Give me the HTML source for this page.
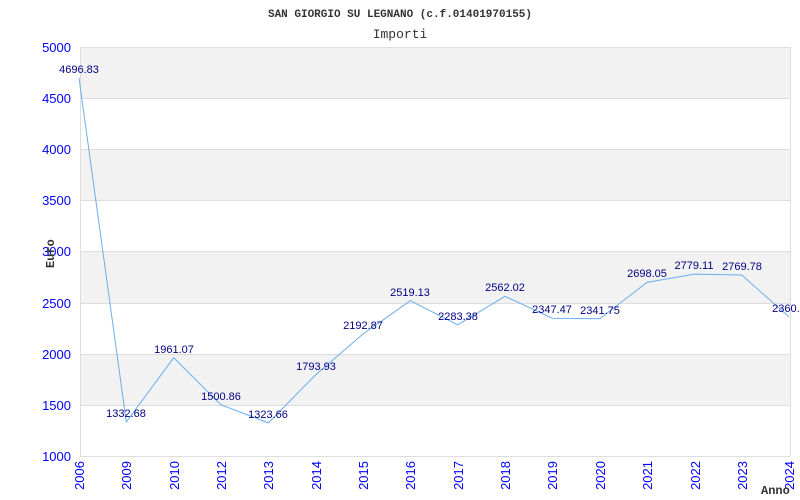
<!DOCTYPE html>
<html><head><meta charset="utf-8"><style>
html,body{margin:0;padding:0;background:#fff;width:800px;height:500px;overflow:hidden}
</style></head><body>
<svg width="800" height="500" xmlns="http://www.w3.org/2000/svg" font-family="Liberation Sans, sans-serif">
<rect width="800" height="500" fill="#fff"/>
<text x="400" y="17" text-anchor="middle" font-family="Liberation Mono, monospace" font-size="11" font-weight="bold" fill="#333">SAN GIORGIO SU LEGNANO (c.f.01401970155)</text>
<text x="400" y="38" text-anchor="middle" font-family="Liberation Mono, monospace" font-size="13" fill="#333">Importi</text>
<g fill="#f2f2f2">
<rect x="80" y="47" width="710" height="51"/>
<rect x="80" y="149" width="710" height="51"/>
<rect x="80" y="251" width="710" height="52"/>
<rect x="80" y="354" width="710" height="51"/>
</g>
<g stroke="#dddddd" stroke-width="1">
<line x1="80" y1="47.5" x2="790" y2="47.5"/>
<line x1="80" y1="98.5" x2="790" y2="98.5"/>
<line x1="80" y1="149.5" x2="790" y2="149.5"/>
<line x1="80" y1="200.5" x2="790" y2="200.5"/>
<line x1="80" y1="251.5" x2="790" y2="251.5"/>
<line x1="80" y1="303.5" x2="790" y2="303.5"/>
<line x1="80" y1="354.5" x2="790" y2="354.5"/>
<line x1="80" y1="405.5" x2="790" y2="405.5"/>
<line x1="80" y1="456.5" x2="790" y2="456.5"/>
<line x1="80.5" y1="47" x2="80.5" y2="456"/>
<line x1="790.5" y1="47" x2="790.5" y2="456"/>
</g>
<g fill="#0000ff" font-size="13" text-anchor="end">
<text x="71" y="52">5000</text><text x="71" y="103">4500</text><text x="71" y="154">4000</text><text x="71" y="205">3500</text><text x="71" y="256">3000</text><text x="71" y="308">2500</text><text x="71" y="359">2000</text><text x="71" y="410">1500</text><text x="71" y="461">1000</text>
</g>
<g fill="#0000ff" font-size="13" text-anchor="end">
<text transform="translate(84,461) rotate(-90)">2006</text>
<text transform="translate(131,461) rotate(-90)">2009</text>
<text transform="translate(179,461) rotate(-90)">2010</text>
<text transform="translate(226,461) rotate(-90)">2012</text>
<text transform="translate(273,461) rotate(-90)">2013</text>
<text transform="translate(321,461) rotate(-90)">2014</text>
<text transform="translate(368,461) rotate(-90)">2015</text>
<text transform="translate(415,461) rotate(-90)">2016</text>
<text transform="translate(463,461) rotate(-90)">2017</text>
<text transform="translate(510,461) rotate(-90)">2018</text>
<text transform="translate(557,461) rotate(-90)">2019</text>
<text transform="translate(605,461) rotate(-90)">2020</text>
<text transform="translate(652,461) rotate(-90)">2021</text>
<text transform="translate(700,461) rotate(-90)">2022</text>
<text transform="translate(747,461) rotate(-90)">2023</text>
<text transform="translate(794,461) rotate(-90)">2024</text>
</g>
<polyline fill="none" stroke="#6aaef0" stroke-width="1" points="79,78 126.3,422 173.7,357.7 221,404.8 268.3,422.9 315.7,374.8 363,334 410.3,300.7 457.7,324.8 505,296.3 552.3,318.2 599.7,318.8 647,282.4 694.3,274.1 741.7,275 789,316.9"/>
<g fill="#000080" font-size="11" text-anchor="middle">
<text x="79" y="73">4696.83</text>
<text x="126" y="417">1332.68</text>
<text x="174" y="353">1961.07</text>
<text x="221" y="400">1500.86</text>
<text x="268" y="418">1323.66</text>
<text x="316" y="370">1793.93</text>
<text x="363" y="329">2192.87</text>
<text x="410" y="296">2519.13</text>
<text x="458" y="320">2283.38</text>
<text x="505" y="291">2562.02</text>
<text x="552" y="313">2347.47</text>
<text x="600" y="314">2341.75</text>
<text x="647" y="277">2698.05</text>
<text x="694" y="269">2779.11</text>
<text x="742" y="270">2769.78</text>
<text x="789" y="312">2360.6</text>
</g>
<text transform="translate(54,268) rotate(-90)" font-family="Liberation Mono, monospace" font-size="12" font-weight="bold" fill="#333">Euro</text>
<text x="761" y="494" font-family="Liberation Mono, monospace" font-size="12" font-weight="bold" fill="#333">Anno</text>
</svg>
</body></html>
